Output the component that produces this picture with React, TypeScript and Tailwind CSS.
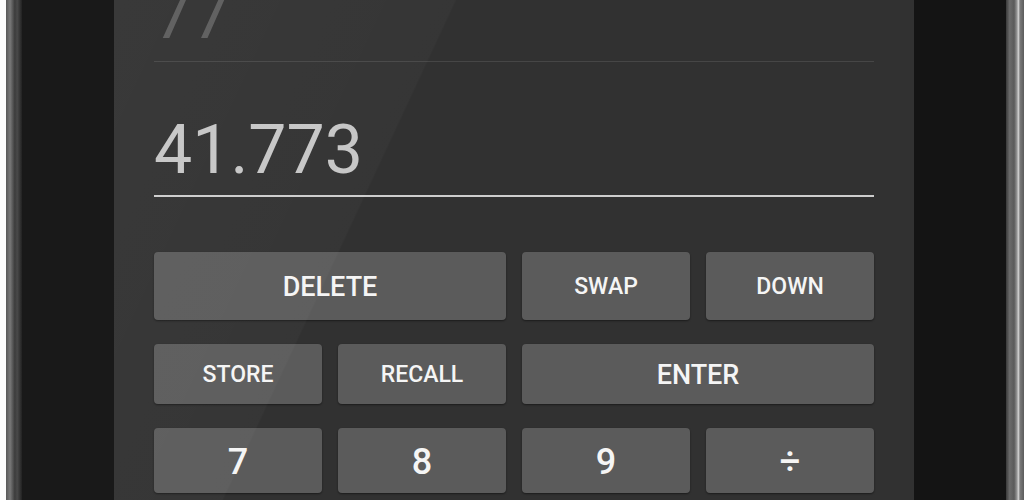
const KEYS = [
  { label: 'DELETE', span: 2, size: 'text-[27px]', row: 'h-[68px]' },
  { label: 'SWAP', span: 1, size: 'text-[23px]', row: 'h-[68px]' },
  { label: 'DOWN', span: 1, size: 'text-[23px]', row: 'h-[68px]' },
  { label: 'STORE', span: 1, size: 'text-[23px]', row: 'h-[60px]' },
  { label: 'RECALL', span: 1, size: 'text-[23px]', row: 'h-[60px]' },
  { label: 'ENTER', span: 2, size: 'text-[27px]', row: 'h-[60px]' },
  { label: '7', span: 1, size: 'text-[36px]', row: 'h-[65px]' },
  { label: '8', span: 1, size: 'text-[36px]', row: 'h-[65px]' },
  { label: '9', span: 1, size: 'text-[36px]', row: 'h-[65px]' },
  { label: '÷', span: 1, size: 'text-[36px]', row: 'h-[65px]' },
]

export default function App() {
  return (
    <div
      className="flex w-[1024px] h-[500px] overflow-hidden bg-white"
      style={{ fontFamily: 'Roboto, "Liberation Sans", sans-serif' }}
    >
      {/* left device edge */}
      <div className="w-[6px] bg-white" />
      <div className="w-[16px] bg-[linear-gradient(90deg,#5a5a5a_0%,#7a7a7a_25%,#3c3c3c_55%,#4a4a4a_70%,#222_100%)]" />
      <div className="w-[92px] bg-[#191919]" />

      {/* screen */}
      <div className="relative w-[800px] bg-[#313131] px-10">
        <div className="pointer-events-none absolute inset-0 bg-[linear-gradient(115deg,rgba(255,255,255,0.04)_0%,rgba(255,255,255,0.025)_33%,rgba(255,255,255,0)_33.2%)]" />

        {/* history */}
        <div className="h-[61px] overflow-hidden">
          <div className="-mt-[19px] text-[68px] leading-none font-normal text-[#5c5c5c]">77</div>
        </div>
        <div className="h-px bg-[#464646]" />

        {/* current value */}
        <div className="mt-[54px] text-[68px] leading-none font-normal text-[#c6c6c6]">41.773</div>
        <div className="mt-[11px] h-[2px] bg-[#cdcdcd]" />

        {/* keypad */}
        <div className="mt-[55px] grid grid-cols-4 gap-x-4 gap-y-6">
          {KEYS.map((k) => (
            <button
              key={k.label}
              type="button"
              className={`${k.span === 2 ? 'col-span-2' : 'col-span-1'} ${k.row} ${k.size} flex items-center justify-center rounded-[4px] bg-[#5b5b5b] pt-[2px] font-medium text-[#f5f5f5] shadow-[0_1px_2px_rgba(0,0,0,0.45)]`}
            >
              {k.label}
            </button>
          ))}
        </div>
      </div>

      {/* right device edge */}
      <div className="w-[92px] bg-[#141414]" />
      <div className="w-[18px] bg-[linear-gradient(90deg,#3a3a3a_0%,#6a6a6a_20%,#5a5a5a_45%,#9a9a9a_62%,#d8d8d8_68%,#7a7a7a_78%,#5c5c5c_100%)]" />
    </div>
  )
}
